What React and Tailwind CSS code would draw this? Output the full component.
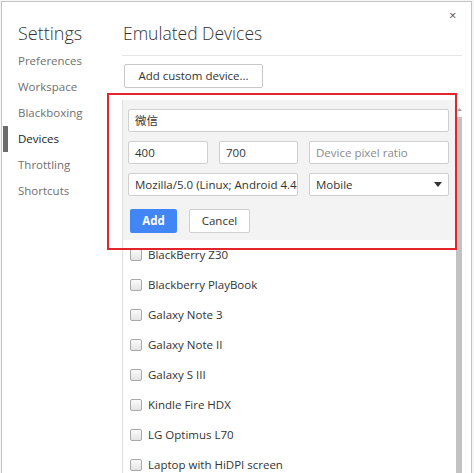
import React from "react";

const font = { fontFamily: '"Open Sans", "Noto Sans CJK SC", sans-serif' };

const navItems = ["Preferences", "Workspace", "Blackboxing", "Devices", "Throttling", "Shortcuts"];

const devices = [
  "BlackBerry Z30",
  "Blackberry PlayBook",
  "Galaxy Note 3",
  "Galaxy Note II",
  "Galaxy S III",
  "Kindle Fire HDX",
  "LG Optimus L70",
  "Laptop with HiDPI screen",
];

const Field = ({ className, children, muted }) => (
  <div
    className={`h-[23px] border border-[#cfcfcf] rounded-[2px] bg-white pl-[6px] flex items-center overflow-hidden whitespace-nowrap text-[11.5px] ${
      muted ? "text-[#8a8a8a]" : "text-[#333]"
    } ${className || ""}`}
  >
    {children}
  </div>
);

export default function App() {
  return (
    <div className="relative w-[474px] h-[473px] overflow-hidden bg-[#f6f6f6]" style={font}>
      {/* dialog */}
      <div className="relative ml-px mt-px w-[471px] h-[472px] bg-white border-l border-t border-r border-[#c4c4c4] flex">
        {/* sidebar */}
        <div className="w-[120px] shrink-0">
          <div className="h-[46px] pl-[16px] pt-[19px] text-[18px] leading-[24px] text-[#333] font-light">Settings</div>
          {navItems.map((label) => {
            const active = label === "Devices";
            return (
              <div key={label} className="h-[26px] flex items-center">
                <span className={`ml-px w-[5px] h-full ${active ? "bg-[#6b6b6b]" : ""}`} />
                <span className={`ml-[10px] text-[11.5px] ${active ? "text-[#222]" : "text-[#707070]"}`}>{label}</span>
              </div>
            );
          })}
        </div>

        {/* main */}
        <div className="flex-1 flex flex-col min-w-0 min-h-0">
          <div className="shrink-0 mr-[9px] h-[54px] border-b border-[#e6e6e6] pl-px pt-[19px] text-[17.5px] leading-[24px] text-[#333] font-light">
            Emulated Devices
          </div>
          <div className="shrink-0 mt-[8px] pl-[2px] flex">
            <button className="h-[24px] w-[139px] border border-[#c8c8c8] rounded-[2px] bg-white text-[11.5px] font-medium text-[#333]">
              Add custom device...
            </button>
          </div>

          <div className="mt-[12px] flex flex-1 min-h-0 overflow-hidden">
            <div className="w-[333px] border-l border-[#e0e0e0]">
              {/* editor panel */}
              <div className="bg-[#f3f3f3] pt-[9px] pb-[7px] pl-[5px] pr-[6px] flex flex-col">
                <Field>微信</Field>
                <div className="mt-[9px] flex gap-[11px]">
                  <Field className="w-[80px]">400</Field>
                  <Field className="w-[79px]">700</Field>
                  <Field className="flex-1" muted>
                    Device pixel ratio
                  </Field>
                </div>
                <div className="mt-[9px] flex gap-[11px]">
                  <Field className="w-[170px]">Mozilla/5.0 (Linux; Android 4.4</Field>
                  <Field className="flex-1 justify-between pr-[6px]">
                    <span>Mobile</span>
                    <svg width="8" height="5" viewBox="0 0 8 5">
                      <path d="M0 0h8L4 5z" fill="#333" />
                    </svg>
                  </Field>
                </div>
                <div className="mt-[13px] flex items-center">
                  <button className="ml-[2px] h-[24px] w-[47px] rounded-[2px] bg-[#4285f4] text-white text-[11.5px] font-bold">
                    Add
                  </button>
                  <button className="ml-[12px] h-[24px] w-[61px] rounded-[2px] border border-[#cfcfcf] bg-white text-[#333] text-[11.5px] font-medium">
                    Cancel
                  </button>
                </div>
              </div>

              {/* device list */}
              {devices.map((d) => (
                <div key={d} className="h-[30px] flex items-center pl-[7px]">
                  <span className="w-[12px] h-[12px] rounded-[2px] border border-[#a9a9a9] bg-gradient-to-b from-[#fafafa] to-[#e4e4e4]" />
                  <span className="ml-[6px] text-[11.5px] text-[#333]">{d}</span>
                </div>
              ))}
            </div>

            {/* scrollbar */}
            <div className="w-[8px] flex flex-col items-start">
              <div className="h-[17px] w-[8px] flex justify-center pt-[8px]">
                <svg width="5" height="3" viewBox="0 0 5 3">
                  <path d="M0 3h5L2.5 0z" fill="#a3a3a3" />
                </svg>
              </div>
              <div className="ml-px w-[6px] flex-1 bg-[#c2c2c2]" />
            </div>
          </div>
        </div>

        {/* close */}
        <span className="absolute left-[447px] top-[7px] text-[13px] text-[#555] leading-none">×</span>
      </div>

      {/* red annotation box */}
      <div className="absolute left-[107px] top-[93px] w-[350px] h-[157px] border-2 border-[#e3242b]" />
    </div>
  );
}
